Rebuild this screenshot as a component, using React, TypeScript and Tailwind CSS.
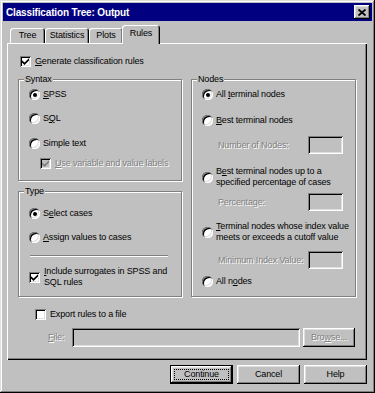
import React from "react"

const raised =
  "shadow-[inset_-1px_-1px_0_#000,inset_1px_1px_0_#fff,inset_-2px_-2px_0_#808080,inset_2px_2px_0_#dfdfdf]"
const sunken =
  "shadow-[inset_1px_1px_0_#808080,inset_-1px_-1px_0_#fff,inset_2px_2px_0_#000,inset_-2px_-2px_0_#dfdfdf]"
const dim = "text-[#808080] [text-shadow:1px_1px_0_#fff]"

function CheckBox({ checked, disabled }: { checked?: boolean; disabled?: boolean }) {
  return (
    <span
      className={`flex h-[11px] w-[11px] shrink-0 items-center justify-center ${
        disabled ? "bg-[#c0c0c0]" : "bg-white"
      } ${sunken}`}
    >
      {checked && (
        <svg width="7" height="7" viewBox="0 0 7 7">
          <path d="M0 2.2 L2.5 4.6 L7 0.2 L7 2.6 L2.5 7 L0 4.6 Z" fill={disabled ? "#808080" : "#000"} />
        </svg>
      )}
    </span>
  )
}

function Radio({ checked }: { checked?: boolean }) {
  return (
    <span className={`flex h-[11px] w-[11px] shrink-0 items-center justify-center rounded-full bg-white ${sunken}`}>
      {checked && <span className="h-[4px] w-[4px] rounded-full bg-black" />}
    </span>
  )
}

function Option({
  checked,
  className = "",
  children,
}: {
  checked?: boolean
  className?: string
  children: React.ReactNode
}) {
  return (
    <div className={`flex items-center gap-[3px] ${className}`}>
      <Radio checked={checked} />
      <span className="whitespace-nowrap">{children}</span>
    </div>
  )
}

function Check({
  checked,
  disabled,
  className = "",
  children,
}: {
  checked?: boolean
  disabled?: boolean
  className?: string
  children: React.ReactNode
}) {
  return (
    <div className={`flex items-center gap-[4px] ${className}`}>
      <CheckBox checked={checked} disabled={disabled} />
      <span className={`whitespace-nowrap ${disabled ? dim : ""}`}>{children}</span>
    </div>
  )
}

function GroupBox({
  title,
  className = "",
  children,
}: {
  title: string
  className?: string
  children: React.ReactNode
}) {
  return (
    <fieldset
      className={`m-0 min-w-0 border border-[#808080] p-0 shadow-[1px_1px_0_#fff,inset_1px_1px_0_#fff] ${className}`}
    >
      <legend className="ml-[5px] bg-[#c0c0c0] px-[1px] leading-[11px]">{title}</legend>
      {children}
    </fieldset>
  )
}

function Field({ label, className = "" }: { label: string; className?: string }) {
  return (
    <div className={`flex items-center pl-[16px] ${className}`}>
      <span className={`whitespace-nowrap ${dim}`}>{label}</span>
      <span className={`ml-auto h-[18px] w-[35px] bg-[#c0c0c0] ${sunken}`} />
    </div>
  )
}

function Tab({ label, active, className = "" }: { label: string; active?: boolean; className?: string }) {
  return (
    <div
      className={`flex items-center justify-center rounded-t-[3px] bg-[#c0c0c0] shadow-[inset_1px_1px_0_#fff,inset_-1px_0_0_#000,inset_-2px_0_0_#808080] ${
        active ? "relative z-10 -mb-px h-[19px] pb-[3px]" : "h-[15px]"
      } ${className}`}
    >
      {label}
    </div>
  )
}

function Button({
  children,
  isDefault,
  disabled,
}: {
  children: React.ReactNode
  isDefault?: boolean
  disabled?: boolean
}) {
  if (isDefault) {
    return (
      <div className="h-[19px] w-[63px] border border-black">
        <div className={`flex h-full w-full p-[3px] ${raised}`}>
          <span className="flex flex-1 items-center justify-center border border-dotted border-black">
            {children}
          </span>
        </div>
      </div>
    )
  }
  return (
    <div
      className={`flex h-[19px] w-[63px] items-center justify-center ${raised} ${disabled ? dim : ""}`}
    >
      {children}
    </div>
  )
}

export default function App() {
  return (
    <div
      className={`h-[393px] w-[375px] bg-[#c0c0c0] p-[3px] font-['Liberation_Sans',Arial,sans-serif] text-[9px] leading-[11px] tracking-[-0.15px] text-black shadow-[inset_-1px_-1px_0_#000,inset_1px_1px_0_#dfdfdf,inset_-2px_-2px_0_#808080,inset_2px_2px_0_#fff]`}
    >
      {/* title bar */}
      <div className="flex h-[18px] items-center bg-[#000080] pl-[3px] pr-[2px]">
        <span className="text-[10px] font-bold text-white">Classification Tree: Output</span>
        <div className={`ml-auto flex h-[14px] w-[16px] items-center justify-center bg-[#c0c0c0] ${raised}`}>
          <svg width="8" height="7" viewBox="0 0 8 7">
            <path d="M0.5 0.5 L7.5 6.5 M7.5 0.5 L0.5 6.5" stroke="#000" strokeWidth="1.8" />
          </svg>
        </div>
      </div>

      {/* tabs */}
      <div className="mt-[4px] flex h-[18px] items-end pl-[7px]">
        <Tab label="Tree" className="w-[35px]" />
        <Tab label="Statistics" className="w-[44px]" />
        <Tab label="Plots" className="w-[34px]" />
        <Tab label="Rules" active className="-ml-px w-[38px]" />
      </div>

      {/* panel */}
      <div className="ml-[4px] mr-[5px] h-[317px] pl-[11px] pr-[12px] pt-[13px] shadow-[inset_1px_1px_0_#fff,inset_-1px_-1px_0_#000,inset_-2px_-2px_0_#808080]">
        <Check checked className="ml-[2px]">
          <u>G</u>enerate classification rules
        </Check>

        <div className="mt-[7px] grid grid-cols-[164px_165px] gap-x-[9px]">
          <div className="flex flex-col">
            <GroupBox title="Syntax">
              <div className="flex flex-col pb-[11px] pl-[10px]">
                <Option checked className="mt-[4px]">
                  <u>S</u>PSS
                </Option>
                <Option className="mt-[13px]">
                  S<u>Q</u>L
                </Option>
                <Option className="mt-[14px]">Simple text</Option>
                <Check checked disabled className="ml-[11px] mt-[9px]">
                  <u>U</u>se variable and value labels
                </Check>
              </div>
            </GroupBox>

            <GroupBox title="Type" className="mt-[5px] flex-1">
              <div className="flex flex-col pb-[7px] pl-[10px]">
                <Option checked className="mt-[11px]">
                  S<u>e</u>lect cases
                </Option>
                <Option className="mt-[13px]">
                  <u>A</u>ssign values to cases
                </Option>
                <div className="ml-[1px] mr-[13px] mt-[12px] h-[2px] border-b border-t border-b-white border-t-[#808080]" />
                <Check checked className="mt-[9px]">
                  <span>
                    <u>I</u>nclude surrogates in SPSS and
                    <br />
                    SQL rules
                  </span>
                </Check>
              </div>
            </GroupBox>
          </div>

          <GroupBox title="Nodes">
            <div className="flex flex-col pb-[9px] pl-[10px] pr-[12px]">
              <Option checked className="mt-[4px]">
                All <u>t</u>erminal nodes
              </Option>
              <Option className="mt-[15px]">
                <u>B</u>est terminal nodes
              </Option>
              <Field label="Number of Nodes:" className="mt-[10px]" />
              <Option className="mt-[12px]">
                B<u>e</u>st terminal nodes up to a
                <br />
                specified percentage of cases
              </Option>
              <Field label="Percentage:" className="mt-[5px]" />
              <Option className="mt-[10px]">
                <u>T</u>erminal nodes whose index value
                <br />
                meets or exceeds a cutoff value
              </Option>
              <Field label="Minimum Index Value:" className="mt-[8px]" />
              <Option className="mt-[7px]">
                All n<u>o</u>des
              </Option>
            </div>
          </GroupBox>
        </div>

        <Check className="ml-[17px] mt-[12px]">Export rules to a file</Check>

        <div className="ml-[30px] mt-[8px] flex items-center">
          <span className={`w-[24px] ${dim}`}>
            <u>F</u>ile:
          </span>
          <span className={`h-[19px] flex-1 bg-[#c0c0c0] ${sunken}`} />
          <div className="ml-[3px] w-[52px]">
            <div className={`flex h-[19px] items-center justify-center ${raised} ${dim}`}>
              Bro<u>w</u>se...
            </div>
          </div>
        </div>
      </div>

      {/* buttons */}
      <div className="mr-[5px] mt-[5px] flex justify-end gap-[4px]">
        <Button isDefault>Continue</Button>
        <Button>Cancel</Button>
        <Button>Help</Button>
      </div>
    </div>
  )
}
